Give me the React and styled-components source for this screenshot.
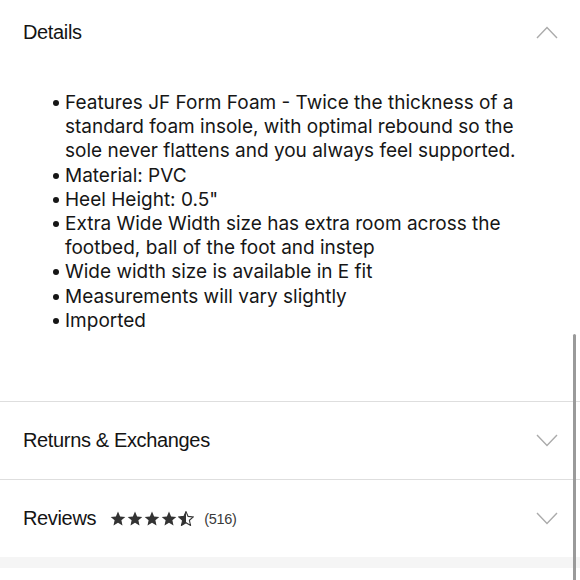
import React from 'react';
import styled, { createGlobalStyle } from 'styled-components';

const GlobalStyle = createGlobalStyle`
  html, body {
    margin: 0;
    padding: 0;
    background: #fff;
  }
  body {
    width: 580px;
    height: 580px;
    overflow: hidden;
    font-family: 'Liberation Sans', Arial, sans-serif;
    color: #1b1b1b;
  }
`;

const Page = styled.div`
  position: relative;
  width: 580px;
  height: 580px;
  overflow: hidden;
`;

const Section = styled.section`
  border-bottom: ${({ $last }) => ($last ? 'none' : '1px solid #dedede')};
`;

const Header = styled.div`
  display: flex;
  align-items: center;
  justify-content: space-between;
  height: ${({ $h }) => $h}px;
  padding: 0 22px 0 23px;
`;

const Title = styled.div`
  display: flex;
  align-items: center;
  font-size: 20px;
  letter-spacing: -0.35px;
  color: #141414;
`;

const Body = styled.div`
  padding: 27px 0 68px 0;
`;

const List = styled.ul`
  margin: 0;
  padding: 0 0 0 65px;
  width: 475px;
  font-family: Inter, 'Noto Sans', sans-serif;
  font-size: 19px;
  line-height: 24.2px;
  color: #161616;
  letter-spacing: 0;
`;

const Item = styled.li`
  position: relative;
  list-style: none;
  &::before {
    content: '';
    position: absolute;
    left: -12px;
    top: 9px;
    width: 6px;
    height: 6px;
    border-radius: 50%;
    background: #161616;
  }
`;

const Stars = styled.div`
  display: flex;
  gap: 1px;
  margin-left: 14px;
`;

const Count = styled.span`
  margin-left: 10px;
  font-size: 14.5px;
  letter-spacing: -0.3px;
  color: #3a3a3a;
`;

const Band = styled.div`
  height: 11px;
  background: #f5f5f5;
`;

const Scrollbar = styled.div`
  position: absolute;
  right: 4px;
  top: 334px;
  width: 3px;
  height: 260px;
  border-radius: 2px;
  background: #9a9a9a;
`;

const Chevron = ({ up }) => (
  <svg width="22" height="13" viewBox="0 0 22 13" fill="none">
    <path
      d={up ? 'M1 12 L11 1.5 L21 12' : 'M1 1 L11 11.5 L21 1'}
      stroke="#ababab"
      strokeWidth="1.4"
    />
  </svg>
);

const starPath =
  'M8 0.6 L10.1 5.4 L15.3 5.9 L11.4 9.3 L12.5 14.4 L8 11.7 L3.5 14.4 L4.6 9.3 L0.7 5.9 L5.9 5.4 Z';

const Star = ({ half }) => (
  <svg width="16" height="15" viewBox="0 0 16 15">
    {half ? (
      <>
        <defs>
          <clipPath id="halfStar">
            <rect x="0" y="0" width="8" height="15" />
          </clipPath>
        </defs>
        <path d={starPath} fill="none" stroke="#333" strokeWidth="1.1" />
        <path d={starPath} fill="#333" clipPath="url(#halfStar)" />
      </>
    ) : (
      <path d={starPath} fill="#333" />
    )}
  </svg>
);

const details = [
  'Features JF Form Foam - Twice the thickness of a standard foam insole, with optimal rebound so the sole never flattens and you always feel supported.',
  'Material: PVC',
  'Heel Height: 0.5"',
  'Extra Wide Width size has extra room across the footbed, ball of the foot and instep',
  'Wide width size is available in E fit',
  'Measurements will vary slightly',
  'Imported',
];

export default function App() {
  return (
    <Page>
      <GlobalStyle />
      <Section>
        <Header $h={64}>
          <Title>Details</Title>
          <Chevron up />
        </Header>
        <Body>
          <List>
            {details.map((d) => (
              <Item key={d}>{d}</Item>
            ))}
          </List>
        </Body>
      </Section>
      <Section>
        <Header $h={77}>
          <Title>Returns &amp; Exchanges</Title>
          <Chevron />
        </Header>
      </Section>
      <Section $last>
        <Header $h={77}>
          <Title>
            Reviews
            <Stars>
              <Star />
              <Star />
              <Star />
              <Star />
              <Star half />
            </Stars>
            <Count>(516)</Count>
          </Title>
          <Chevron />
        </Header>
      </Section>
      <Band />
      <Scrollbar />
    </Page>
  );
}
